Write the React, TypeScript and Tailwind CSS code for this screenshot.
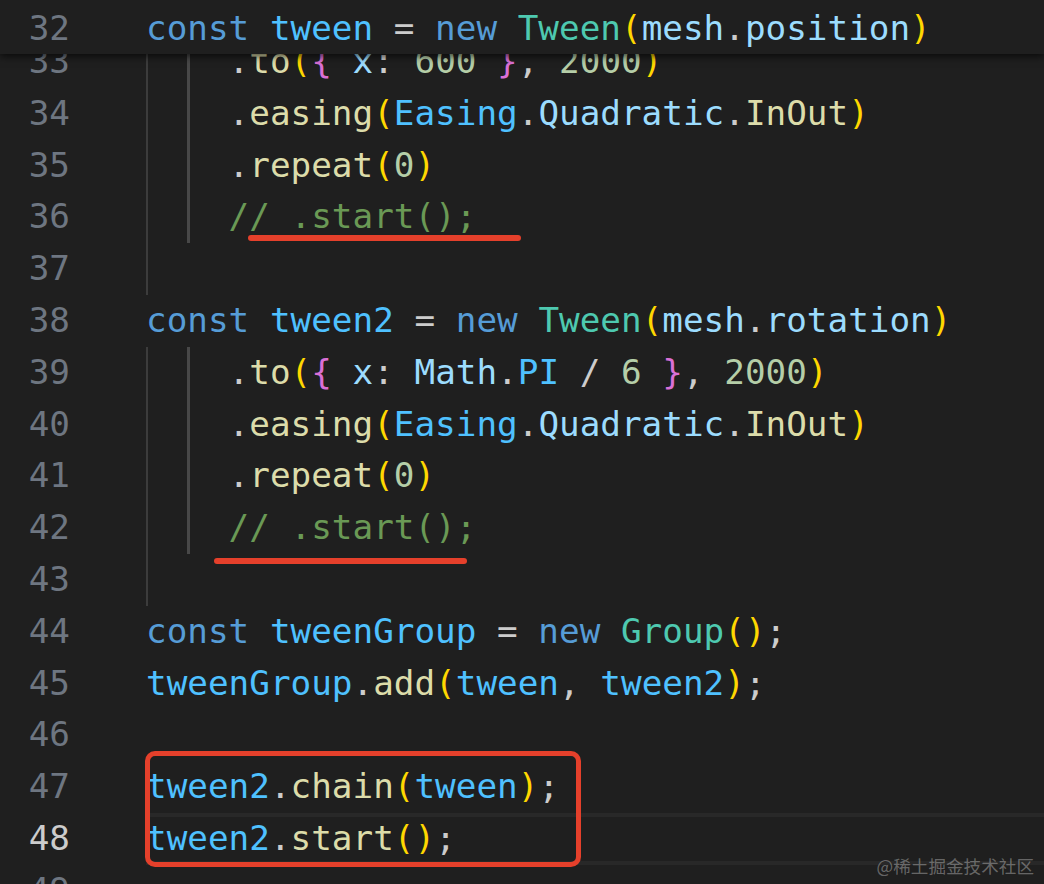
import React from "react";

type Tok = [string, string];

const K = "text-[#569cd6]";
const V = "text-[#4fc1ff]";
const C = "text-[#4ec9b0]";
const P1 = "text-[#ffd700]";
const P2 = "text-[#da70d6]";
const L = "text-[#9cdcfe]";
const F = "text-[#dcdcaa]";
const N = "text-[#b5cea8]";
const D = "text-[#cccccc]";
const G = "text-[#6a9955]";

type Line = { n: number; guides: number; toks: Tok[]; current?: boolean };

const lines: Line[] = [
  {
    n: 33,
    guides: 2,
    toks: [[".", D], ["to", F], ["(", P1], ["{", P2], [" x", L], [": ", D], ["600", N], [" ", D], ["}", P2], [", ", D], ["2000", N], [")", P1]],
  },
  { n: 34, guides: 2, toks: [[".", D], ["easing", F], ["(", P1], ["Easing", V], [".", D], ["Quadratic", L], [".", D], ["InOut", F], [")", P1]] },
  { n: 35, guides: 2, toks: [[".", D], ["repeat", F], ["(", P1], ["0", N], [")", P1]] },
  { n: 36, guides: 2, toks: [["// .start();", G]] },
  { n: 37, guides: 1, toks: [] },
  {
    n: 38,
    guides: 0,
    toks: [["const", K], [" ", D], ["tween2", V], [" = ", D], ["new", K], [" ", D], ["Tween", C], ["(", P1], ["mesh", L], [".", D], ["rotation", L], [")", P1]],
  },
  {
    n: 39,
    guides: 2,
    toks: [[".", D], ["to", F], ["(", P1], ["{", P2], [" x", L], [": ", D], ["Math", L], [".", D], ["PI", V], [" / ", D], ["6", N], [" ", D], ["}", P2], [", ", D], ["2000", N], [")", P1]],
  },
  { n: 40, guides: 2, toks: [[".", D], ["easing", F], ["(", P1], ["Easing", V], [".", D], ["Quadratic", L], [".", D], ["InOut", F], [")", P1]] },
  { n: 41, guides: 2, toks: [[".", D], ["repeat", F], ["(", P1], ["0", N], [")", P1]] },
  { n: 42, guides: 2, toks: [["// .start();", G]] },
  { n: 43, guides: 1, toks: [] },
  {
    n: 44,
    guides: 0,
    toks: [["const", K], [" ", D], ["tweenGroup", V], [" = ", D], ["new", K], [" ", D], ["Group", C], ["(", P1], [")", P1], [";", D]],
  },
  { n: 45, guides: 0, toks: [["tweenGroup", V], [".", D], ["add", F], ["(", P1], ["tween", V], [", ", D], ["tween2", V], [")", P1], [";", D]] },
  { n: 46, guides: 0, toks: [] },
  { n: 47, guides: 0, toks: [["tween2", V], [".", D], ["chain", F], ["(", P1], ["tween", V], [")", P1], [";", D]] },
  { n: 48, guides: 0, toks: [["tween2", V], [".", D], ["start", F], ["(", P1], [")", P1], [";", D]], current: true },
  { n: 49, guides: 0, toks: [] },
];

const header: Tok[] = [
  ["const", K], [" ", D], ["tween", V], [" = ", D], ["new", K], [" ", D], ["Tween", C], ["(", P1], ["mesh", L], [".", D], ["position", L], [")", P1],
];

function Code({ toks }: { toks: Tok[] }) {
  return (
    <span className="whitespace-pre leading-[51.8px]">
      {toks.map(([t, c], i) => (
        <span key={i} className={c}>
          {t}
        </span>
      ))}
    </span>
  );
}

function CodeLine({ line }: { line: Line }) {
  return (
    <div className="flex h-[51.8px]">
      <div className={`w-[70px] shrink-0 text-right leading-[51.8px] ${line.current ? "text-[#cccccc]" : "text-[#6e7681]"}`}>
        {line.n}
      </div>
      <div className={`ml-[76px] flex flex-1 items-center ${line.current ? "border-y-4 border-[#282828]" : ""}`}>
        {line.guides >= 1 && <span className="h-full w-[2ch] shrink-0 border-l-2 border-[#3c3c3c]" />}
        {line.guides >= 2 && <span className="h-full w-[2ch] shrink-0 border-l-[3px] border-[#484848]" />}
        <Code toks={line.toks} />
      </div>
    </div>
  );
}

export default function App() {
  return (
    <div className="relative h-[884px] w-[1044px] overflow-hidden bg-[#1f1f1f] font-['DejaVu_Sans_Mono',monospace] text-[34.3px]">
      <div className="pt-[36px]">
        {lines.map((l) => (
          <CodeLine key={l.n} line={l} />
        ))}
      </div>

      {/* sticky scroll header */}
      <div className="absolute inset-x-0 top-0 flex h-[54px] items-center bg-[#1f1f1f] pt-[4px] shadow-[0_2px_8px_rgba(0,0,0,0.75)]">
        <div className="w-[70px] shrink-0 text-right leading-[51.8px] text-[#6e7681]">32</div>
        <div className="ml-[76px]">
          <Code toks={header} />
        </div>
      </div>

      {/* annotations */}
      <div className="absolute left-[248px] top-[235px] h-[6px] w-[273px] rounded-full bg-[#e5402b]" />
      <div className="absolute left-[214px] top-[558px] h-[6px] w-[253px] rounded-full bg-[#e5402b]" />
      <div className="absolute left-[145px] top-[751px] h-[116px] w-[436px] rounded-[10px] border-[5px] border-[#e5402b]" />

      <div className="absolute bottom-[9px] right-[10px] font-['Noto_Sans_CJK_SC',sans-serif] text-[17.6px] leading-none text-[rgba(255,255,255,0.33)]">
        @稀土掘金技术社区
      </div>
    </div>
  );
}
